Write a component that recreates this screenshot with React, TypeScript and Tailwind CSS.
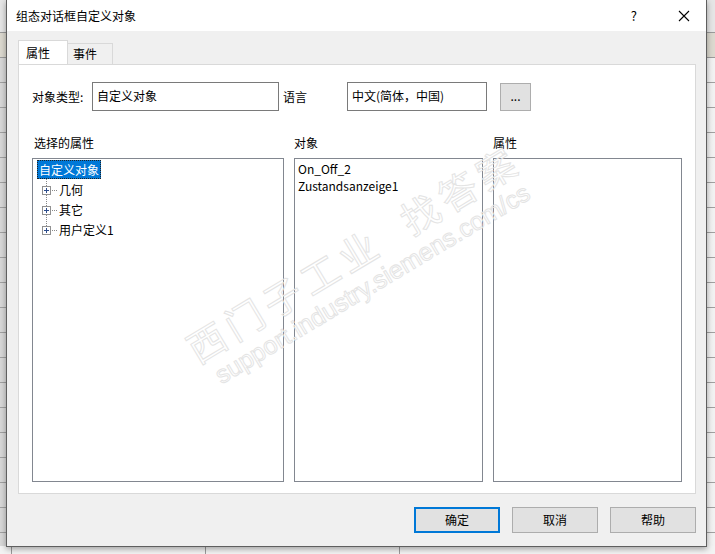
import React from 'react'

const font = "font-['Microsoft_YaHei','Noto_Sans_CJK_SC',sans-serif]"

function PlusBox() {
  return (
    <svg width="9" height="9" viewBox="0 0 9 9" className="shrink-0">
      <rect x="0.5" y="0.5" width="8" height="8" fill="#fff" stroke="#919191" />
      <path d="M2 4.5h5M4.5 2v5" stroke="#2d4d8c" strokeWidth="1" />
    </svg>
  )
}

function TreeItem({ label }: { label: string }) {
  return (
    <div className="flex h-[20px] items-center">
      <div className="relative flex w-[20px] items-center justify-end">
        <PlusBox />
      </div>
      <div className="ml-[1px] w-[5px] border-t border-dotted border-[#8a8a8a]" />
      <span className="ml-[2px] text-[12px] text-black">{label}</span>
    </div>
  )
}

function Btn({ label, primary }: { label: string; primary?: boolean }) {
  return (
    <button
      className={
        primary
          ? 'flex h-[26px] w-[86px] items-center justify-center border-2 border-[#0078d7] bg-[#e1e1e1] text-[12px] text-black'
          : 'flex h-[26px] w-[86px] items-center justify-center border border-[#adadad] bg-[#e1e1e1] text-[12px] text-black'
      }
    >
      {label}
    </button>
  )
}

export default function App() {
  const rows = Array.from({ length: 23 })

  return (
    <div className={`relative h-[554px] w-[715px] overflow-hidden bg-[#ececec] ${font}`}>
      {/* spreadsheet behind the dialog */}
      <div className="flex flex-col">
        <div className="h-[33px] border-b border-[#9a9a9a] bg-[#e6e6e6]" />
        <div className="h-[25px] border-b border-[#9a9a9a] bg-[#dcd9cf]" />
        {rows.map((_, i) => (
          <div key={i} className="h-[25px] border-b border-[#a0a0a0] bg-[linear-gradient(90deg,#d8d8d8,#f2f2f2)]" />
        ))}
      </div>
      <div className="absolute bottom-0 left-0 flex h-[8px] w-full bg-[#f3f3f3]">
        <div className="w-[12px] border-r border-[#9a9a9a]" />
        <div className="w-[194px] border-r border-[#9a9a9a]" />
        <div className="w-[194px] border-r border-[#9a9a9a]" />
      </div>

      {/* dialog window */}
      <div className="absolute left-[6px] top-0 flex h-[547px] w-[701px] flex-col border border-t-0 border-[#5f5f5f] bg-[#f0f0f0] shadow-[0_2px_6px_rgba(0,0,0,0.35)]">
        {/* title bar */}
        <div className="flex h-[31px] items-center bg-white pl-[9px]">
          <span className="text-[12px] text-black">组态对话框自定义对象</span>
          <span className="ml-auto mr-[41px] text-[13px] text-black">?</span>
          <svg width="12" height="12" viewBox="0 0 12 12" className="mr-[16px]">
            <path d="M1 1l10 10M11 1L1 11" stroke="#000" strokeWidth="1.1" />
          </svg>
        </div>

        {/* body */}
        <div className="flex flex-1 flex-col px-[11px] pt-[10px]">
          {/* tabs */}
          <div className="relative z-10 flex h-[23px] items-end">
            <div className="flex h-[24px] w-[50px] items-center border border-b-0 border-[#d9d9d9] bg-white pl-[7px] text-[12px] text-black">
              属性
            </div>
            <div className="flex h-[21px] w-[45px] items-center border border-b-0 border-l-0 border-[#d9d9d9] bg-[#f0f0f0] pl-[5px] text-[12px] text-black">
              事件
            </div>
          </div>

          {/* panel */}
          <div className="relative flex h-[430px] w-[678px] flex-col border border-[#d9d9d9] bg-white pl-[13px]">
            <div className="mt-[17px] flex items-center">
              <span className="w-[60px] text-[12px] text-black">对象类型:</span>
              <div className="flex h-[29px] w-[187px] items-start border border-[#7a7a7a] bg-white px-[4px] pt-[4px] text-[12px] text-black">
                自定义对象
              </div>
              <span className="ml-[4px] w-[64px] text-[12px] text-black">语言</span>
              <div className="flex h-[29px] w-[140px] items-start border border-[#7a7a7a] bg-white px-[4px] pt-[4px] text-[12px] text-black">
                中文(简体，中国)
              </div>
              <button className="ml-[13px] flex h-[28px] w-[31px] items-center justify-center border border-[#adadad] bg-[#e1e1e1] pb-[2px] text-[12px] text-black">
                ...
              </button>
            </div>

            <div className="mt-[23px] flex text-[12px] text-black">
              <span className="w-[262px] pl-[2px]">选择的属性</span>
              <span className="w-[199px]">对象</span>
              <span>属性</span>
            </div>

            <div className="mt-[6px] flex gap-[10px]">
              <div className="h-[324px] w-[252px] border border-[#828790] bg-white pl-[4px] pt-[1px]">
                <div className="relative">
                  <div className="flex h-[19px] w-fit items-center border border-dotted border-[#222] bg-[#0078d7] px-[1px] text-[12px] text-white">
                    自定义对象
                  </div>
                  <div className="absolute left-[9px] top-[19px] h-[51px] border-l border-dotted border-[#8a8a8a]" />
                  <div className="-ml-[6px] mt-[1px]">
                    <TreeItem label="几何" />
                    <TreeItem label="其它" />
                    <TreeItem label="用户定义1" />
                  </div>
                </div>
              </div>
              <div className="h-[324px] w-[189px] border border-[#828790] bg-white pl-[3px] pt-[1px] text-[12px] text-black">
                <div className="h-[17px] leading-[17px]">On_Off_2</div>
                <div className="h-[17px] leading-[17px]">Zustandsanzeige1</div>
              </div>
              <div className="h-[324px] w-[189px] border border-[#828790] bg-white" />
            </div>

            {/* watermark */}
            <div className="pointer-events-none absolute left-[178px] top-[262px] origin-left rotate-[-31deg] whitespace-nowrap text-transparent [-webkit-text-stroke:1px_#e4e4e4]">
              <div className="text-[38px] leading-[44px] tracking-[6px]">西门子工业&nbsp;&nbsp;找答案</div>
              <div className="ml-[10px] text-[25px] leading-[28px] font-['Liberation_Sans',sans-serif]">support.industry.siemens.com/cs</div>
            </div>
          </div>

          {/* buttons */}
          <div className="-mr-[1px] mt-[13px] flex justify-end gap-[12px]">
            <Btn label="确定" primary />
            <Btn label="取消" />
            <Btn label="帮助" />
          </div>
        </div>
      </div>
    </div>
  )
}
